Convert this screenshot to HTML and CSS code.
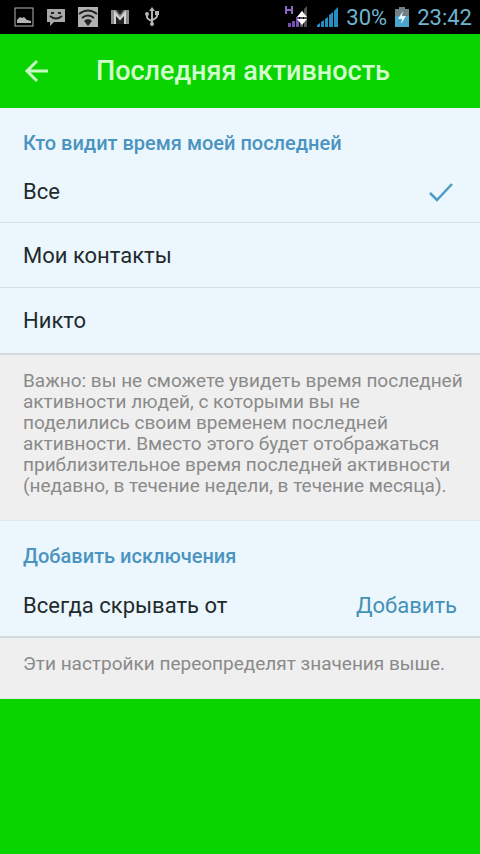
FILE: index.html
```
<!DOCTYPE html>
<html lang="ru">
<head>
    <meta charset="UTF-8">
    <meta name="viewport" content="width=device-width, initial-scale=1">
    <title>Последняя активность</title>
    <link rel="stylesheet" href="styles.css">
</head>
<body>
    <div class="status-bar">
        <div class="status-icons">
            <svg width="20" height="20" viewBox="0 0 20 20">
                <rect x="1" y="1" width="18" height="18" fill="none" stroke="#b5b5b5"/>
                <path d="M3 16v-3l3-3 2 1 2-1 3 3 4 1v2z" fill="#b5b5b5"/>
            </svg>
            <svg width="20" height="20" viewBox="0 0 20 20">
                <path d="M1 2h18v13H8l-4 4v-4H1z" fill="#a8a8a8"/>
                <path d="M5 6h3M12 6h3M4 9q6 5 12 0" fill="none" stroke="#222" stroke-width="2"/>
            </svg>
            <svg width="20" height="20" viewBox="0 0 20 20">
                <rect width="20" height="20" fill="#b0b0b0"/>
                <path d="M1 7q9-7 18 0M4 11q6-5 12 0" fill="none" stroke="#222" stroke-width="2"/>
                <path d="M6 14q4-4 8 0l-4 5z" fill="#222"/>
            </svg>
            <svg width="20" height="20" viewBox="0 0 20 20">
                <rect x="1" y="3" width="18" height="14" fill="#8c8c8c"/>
                <path d="M5 17V8l5 5 5-5v9z" fill="#222"/>
                <path d="M5 17V6l5 6 5-6v11" fill="none" stroke="#d0d0d0" stroke-width="2"/>
                <path d="M6 3h8l-4 5z" fill="#222"/>
            </svg>
            <svg width="20" height="20" viewBox="0 0 20 20">
                <path d="M10 3v14M5 7v3q0 2 5 4M15 6v3q0 2-5 4" fill="none" stroke="#b5b5b5" stroke-width="2"/>
                <path d="M10 0l3 4H7z" fill="#b5b5b5"/>
                <circle cx="5" cy="7" r="2" fill="#b5b5b5"/>
                <rect x="13" y="4" width="4" height="4" fill="#b5b5b5"/>
                <circle cx="10" cy="17" r="2" fill="#b5b5b5"/>
            </svg>
        </div>
        <div class="status-info">
            <svg width="24" height="24" viewBox="0 0 24 24">
                <path d="M2 1v8M8 1v8M2 5h6" fill="none" stroke="#8d68c0" stroke-width="2"/>
                <path d="M4 18h3v4H4zM8 16h3v6H8zM12 12h3v10h-3z" fill="#7651b5"/>
                <path d="M16 8l3-3v17h-3zM20 4l3-3v21h-3z" fill="#555"/>
                <path d="M18 6l5 6H13zM18 20l5-6H13z" fill="#fff"/>
            </svg>
            <svg width="22" height="22" viewBox="0 0 22 22">
                <path d="M1 21v-2l3-2v4zM5 21v-5l3-2v7zM9 21v-8l3-2v10zM13 21V9l4-3v15zM18 21V5l4-4v20z" fill="#258fc4"/>
            </svg>
            <span>30%</span>
            <svg width="14" height="20" viewBox="0 0 14 20">
                <path d="M4 0h6v2h4v18H0V2h4z" fill="#737f86"/>
                <path d="M0 9h14v11H0z" fill="#4aa5cc"/>
                <path d="M8 4l-5 8h4l-1 5 5-8H7z" fill="#e5f8ff"/>
            </svg>
            <time>23:42</time>
        </div>
    </div>

    <header class="header">
        <button class="back" type="button" aria-label="Назад">
            <svg width="24" height="24" viewBox="0 0 24 24">
                <path d="M24 12H4M13 2L3 12l10 10" fill="none" stroke="#c8fac4" stroke-width="3"/>
            </svg>
        </button>
        <h1>Последняя активность</h1>
    </header>

    <main>
        <section class="card" role="radiogroup" aria-labelledby="visibility-title">
            <h2 class="card-title" id="visibility-title">Кто видит время моей последней</h2>
            <label class="row">
                Все
                <input type="radio" name="visibility" value="all" checked>
                <svg class="check" width="24" height="20" viewBox="0 0 24 20">
                    <path d="M1 11l7 7L23 2" fill="none" stroke="#4b9cc5" stroke-width="2.5"/>
                </svg>
            </label>
            <label class="row">
                Мои контакты
                <input type="radio" name="visibility" value="contacts">
                <svg class="check" width="24" height="20" viewBox="0 0 24 20">
                    <path d="M1 11l7 7L23 2" fill="none" stroke="#4b9cc5" stroke-width="2.5"/>
                </svg>
            </label>
            <label class="row">
                Никто
                <input type="radio" name="visibility" value="nobody">
                <svg class="check" width="24" height="20" viewBox="0 0 24 20">
                    <path d="M1 11l7 7L23 2" fill="none" stroke="#4b9cc5" stroke-width="2.5"/>
                </svg>
            </label>
        </section>

        <p class="note">Важно: вы не сможете увидеть время последней активности людей, с которыми вы не поделились своим временем последней активности. Вместо этого будет отображаться приблизительное время последней активности (недавно, в течение недели, в течение месяца).</p>

        <section class="card">
            <h2 class="card-title">Добавить исключения</h2>
            <div class="row">
                <span>Всегда скрывать от</span>
                <button class="add" type="button">Добавить</button>
            </div>
        </section>

        <p class="note">Эти настройки переопределят значения выше.</p>
    </main>
</body>
</html>
```
FILE: styles.css
```
* {
    box-sizing: border-box;
    margin: 0;
    padding: 0;
}

body {
    min-height: 100vh;
    background-color: #0ad400;
    color: #222a2e;
    font-family: Roboto, "Noto Sans", sans-serif;
    font-size: 22px;
}

svg {
    display: block;
    flex-shrink: 0;
}

button {
    border: none;
    background: none;
    font: inherit;
    cursor: pointer;
}

.status-bar {
    display: flex;
    justify-content: space-between;
    align-items: center;
    height: 34px;
    padding: 0 8px 0 14px;
    background-color: #000;
    color: #70b4cf;
}

.status-icons {
    display: flex;
    gap: 12px;
}

.status-info {
    display: flex;
    align-items: center;
    gap: 8px;
}

.header {
    display: flex;
    align-items: center;
    height: 74px;
    padding: 0 24px;
    color: #d2ffce;
}

.back {
    width: 72px;
}

h1 {
    font-size: 27px;
    font-weight: 500;
    line-height: 32px;
    white-space: nowrap;
}

.card {
    border-bottom: 2px solid #d2dadd;
    background-color: #ebf7fc;
}

.card-title {
    padding: 21px 23px 4px;
    color: #4b93c0;
    font-size: 20px;
    font-weight: 500;
    line-height: 28px;
}

.row {
    display: flex;
    justify-content: space-between;
    align-items: center;
    height: 65px;
    padding: 0 23px;
    border-bottom: 1px solid #d5e1e6;
}

.card-title + .row {
    height: 62px;
}

.row:last-child {
    border-bottom: none;
}

.row input {
    appearance: none;
}

.check {
    display: none;
    margin-right: 4px;
}

.row input:checked + .check {
    display: block;
}

.add {
    color: #4390b8;
}

.note {
    padding: 15px 16px 24px 23px;
    border-bottom: 1px solid #dfe8eb;
    background-color: #efefef;
    color: #8a8a8a;
    font-size: 19px;
    line-height: 21px;
}
```
